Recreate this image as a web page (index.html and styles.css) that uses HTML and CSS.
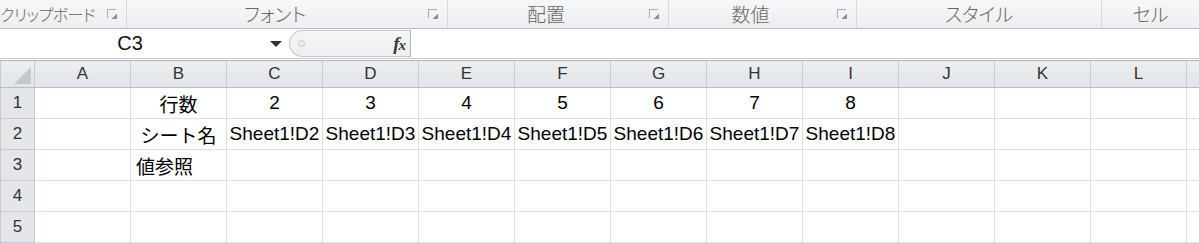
FILE: index.html
```html
<!DOCTYPE html>
<html lang="ja">
<head>
<meta charset="utf-8">
<link rel="stylesheet" href="styles.css">
</head>
<body>
<div class="app">
  <div class="ribbon">
    <div class="group g1"><span class="glabel">クリップボード</span><span class="launch"></span></div>
    <div class="group g2 wl"><span class="glabel">フォント</span><span class="launch"></span></div>
    <div class="group g3 wl"><span class="glabel">配置</span><span class="launch"></span></div>
    <div class="group g4 wl"><span class="glabel">数値</span><span class="launch"></span></div>
    <div class="group g5"><span class="glabel">スタイル</span></div>
    <div class="group g6"><span class="glabel">セル</span></div>
  </div>
  <div class="fbar">
    <div class="namebox"><span class="name">C3</span><span class="tri"></span></div>
    <div class="fxpanel"><span class="dot"></span><span class="fx"><i>f</i><i class="x">x</i></span></div>
    <div class="finput"></div>
  </div>
  <table class="sheet">
    <colgroup>
      <col class="rh"><col><col><col><col><col><col><col><col><col><col><col><col><col class="last">
    </colgroup>
    <thead>
      <tr><th class="corner"><span class="ctri"></span></th><th>A</th><th>B</th><th>C</th><th>D</th><th>E</th><th>F</th><th>G</th><th>H</th><th>I</th><th>J</th><th>K</th><th>L</th><th></th></tr>
    </thead>
    <tbody>
      <tr><th>1</th><td></td><td class="c jp">行数</td><td class="c">2</td><td class="c">3</td><td class="c">4</td><td class="c">5</td><td class="c">6</td><td class="c">7</td><td class="c">8</td><td></td><td></td><td></td><td></td></tr>
      <tr><th>2</th><td></td><td class="c jp">シート名</td><td class="c">Sheet1!D2</td><td class="c">Sheet1!D3</td><td class="c">Sheet1!D4</td><td class="c">Sheet1!D5</td><td class="c">Sheet1!D6</td><td class="c">Sheet1!D7</td><td class="c">Sheet1!D8</td><td></td><td></td><td></td><td></td></tr>
      <tr><th>3</th><td></td><td class="jp l">値参照</td><td></td><td></td><td></td><td></td><td></td><td></td><td></td><td></td><td></td><td></td><td></td></tr>
      <tr><th>4</th><td></td><td></td><td></td><td></td><td></td><td></td><td></td><td></td><td></td><td></td><td></td><td></td><td></td></tr>
      <tr><th>5</th><td></td><td></td><td></td><td></td><td></td><td></td><td></td><td></td><td></td><td></td><td></td><td></td><td></td></tr>
    </tbody>
  </table>
</div>
</body>
</html>
```
FILE: styles.css
```css
html, body { margin: 0; padding: 0; background: #fff; }
body { width: 1199px; height: 243px; overflow: hidden; font-family: "Liberation Sans", "Noto Sans CJK JP", sans-serif; }
.app { width: 1199px; overflow: hidden; }

.ribbon {
  display: flex;
  height: 28px;
  background: linear-gradient(#f6f7f8, #eceef1);
  border-bottom: 1px solid #b9bec6;
  overflow: hidden;
}
.group {
  position: relative;
  flex: none;
  display: flex;
  align-items: center;
  justify-content: center;
  border-right: 1px solid #d5d9de;
  height: 28px;
  box-sizing: border-box;
}
.group.wl { padding-right: 24px; }
.glabel {
  font-family: "Noto Sans CJK JP", sans-serif;
  font-feature-settings: "palt";
  font-size: 19px;
  color: #666;
  font-weight: 300;
  line-height: 28px;
  white-space: nowrap;
}
.g1 { width: 127px; justify-content: flex-start; padding-left: 0; }
.g1 .glabel { font-size: 16px; letter-spacing: -0.5px; }
.g2 { width: 321px; }
.g3 { width: 221px; }
.g4 { width: 188px; }
.g5 { width: 245px; }
.g6 { width: 97px; border-right: none; }
.launch {
  position: absolute;
  right: 10px;
  top: 9px;
  width: 9px;
  height: 9px;
  border-left: 1px solid #a8adb4;
  border-top: 1px solid #a8adb4;
  box-sizing: border-box;
}
.launch::after {
  content: "";
  position: absolute;
  right: -1px;
  bottom: -1px;
  width: 5px;
  height: 5px;
  background: linear-gradient(135deg, transparent 45%, #8b9199 46%);
}

.fbar {
  display: flex;
  height: 29px;
  border-bottom: 1px solid #c5c9cf;
  background: #fff;
}
.namebox {
  width: 289px;
  display: flex;
  align-items: center;
}
.name {
  flex: 1;
  text-align: center;
  font-size: 20px;
  color: #111;
  padding-right: 10px;
}
.tri {
  width: 0; height: 0;
  border-left: 6px solid transparent;
  border-right: 6px solid transparent;
  border-top: 6px solid #333;
  margin-right: 7px;
}
.fxpanel {
  width: 121px;
  margin: 1px 0;
  border: 1px solid #c2c6cc;
  border-right: none;
  border-radius: 14px 0 0 14px;
  background: linear-gradient(#f5f6f7, #eceef0);
  display: flex;
  align-items: center;
  justify-content: space-between;
  padding: 0 5px 0 8px;
  box-sizing: border-box;
}
.dot {
  width: 5px; height: 5px;
  border-radius: 50%;
  border: 1px solid #c6cacf;
  background: #e9ebee;
}
.fx {
  font-family: "Liberation Serif", serif;
  font-size: 19px;
  font-weight: bold;
  color: #3a3a3a;
  letter-spacing: -1px;
}
.fx .x { font-size: 15px; }
.finput {
  flex: 1;
  border-left: 1px solid #b4b9c0;
  margin: 1px 0;
}

.sheet {
  border-collapse: collapse;
  table-layout: fixed;
  width: 1199px;
  margin-top: 1px;
}
.sheet col { width: 96px; }
.sheet col.rh { width: 34px; }
.sheet col.last { width: 13px; }
.sheet thead th {
  height: 26px;
  padding: 0;
  background: linear-gradient(#eceef1, #e1e4e8);
  border: 1px solid #c6cbd2;
  border-top-color: #b3b8bf;
  border-bottom-color: #b9bec6;
  font-weight: normal;
  font-size: 17px;
  color: #333;
  text-align: center;
}
.sheet th.corner { position: relative; }
.ctri {
  position: absolute;
  right: 3px;
  bottom: 3px;
  width: 0; height: 0;
  border-left: 17px solid transparent;
  border-bottom: 17px solid #c3c8ce;
}
.sheet tbody th {
  height: 30px;
  padding: 0;
  background: #e4e6ea;
  border: 1px solid #c6cbd2;
  font-weight: normal;
  font-size: 17px;
  color: #333;
  text-align: center;
}
.sheet td {
  height: 30px;
  padding: 0 2px;
  border: 1px solid #dedfe1;
  font-size: 19px;
  color: #000;
  white-space: nowrap;
  overflow: visible;
}
.sheet td.c { text-align: center; }
.sheet td.l { text-align: left; padding-left: 5px; }
.jp { font-family: "Noto Sans CJK JP", sans-serif; }
```
